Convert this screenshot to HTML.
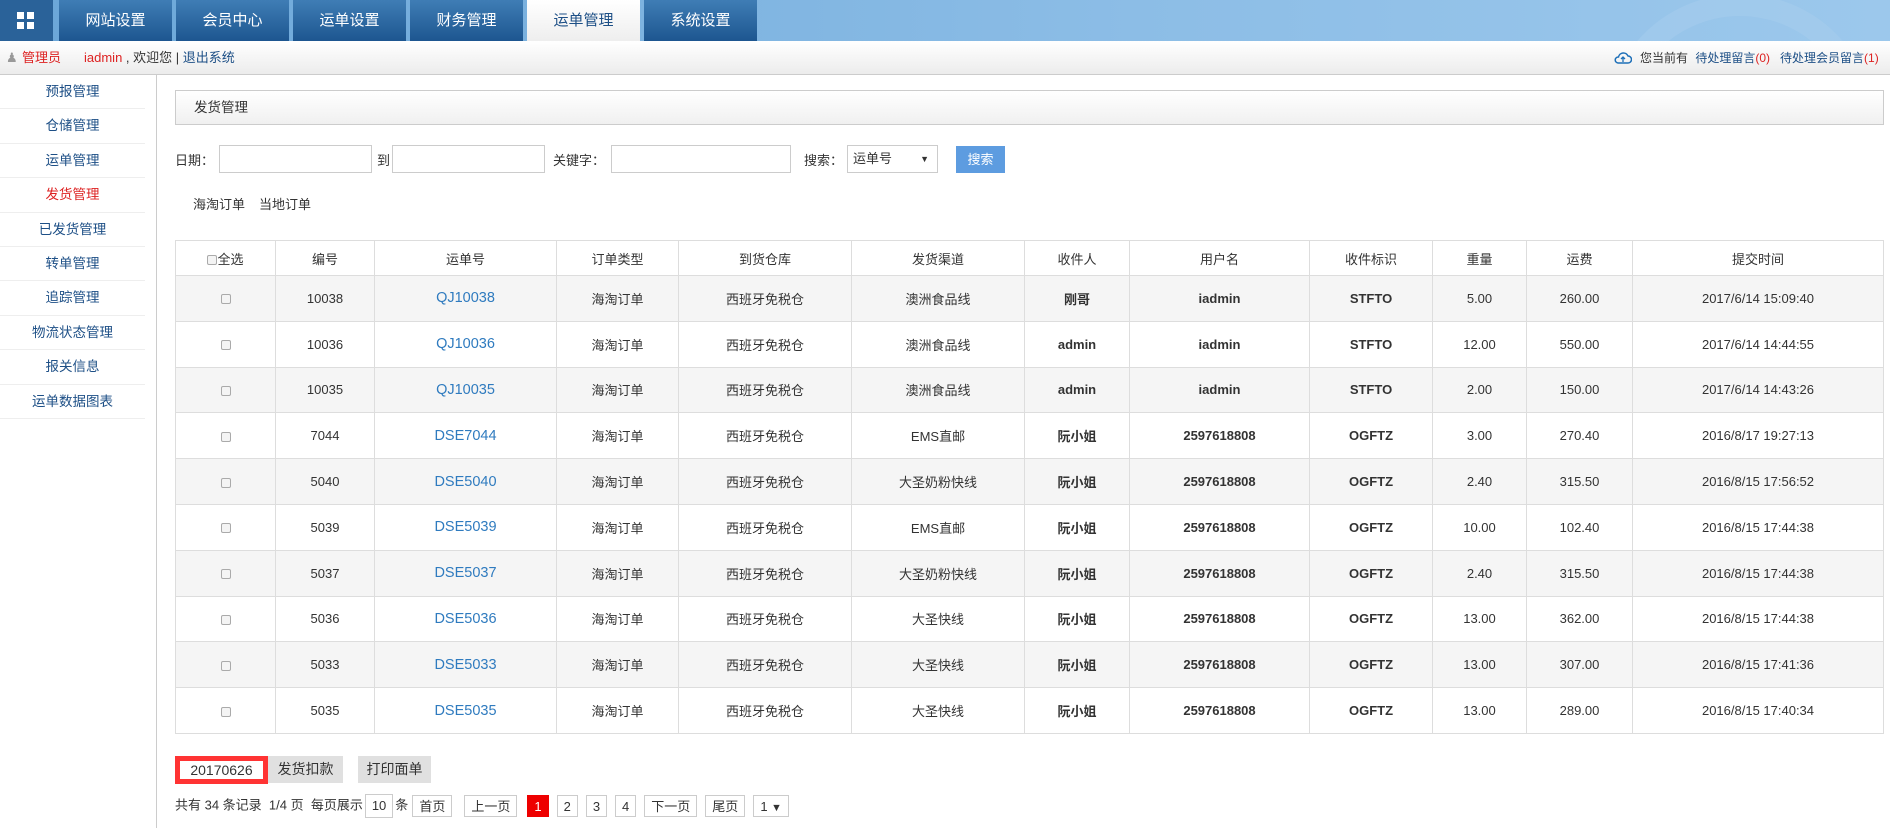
<!DOCTYPE html>
<html><head><meta charset="utf-8"><style>
*{margin:0;padding:0;box-sizing:border-box}
body{width:1890px;height:828px;overflow:hidden;background:#fff;font-family:"Liberation Sans","Noto Sans CJK SC",sans-serif;font-size:13px;color:#333;position:relative}
.hd{position:absolute;left:0;top:0;width:1890px;height:41px;background:linear-gradient(90deg,#6aa6d8,#8cbde6 60%,#9cc8ec);}
.tab{position:absolute;top:0;height:41px;width:113px;background:linear-gradient(#3f7db5,#1d5690);color:#fff;font-size:15px;text-align:center;line-height:41px}
.tab.on{background:linear-gradient(#fff,#eee);color:#1d4f86}
.bar{position:absolute;left:0;top:41px;width:1890px;height:34px;background:linear-gradient(#fff,#ececec);border-bottom:1px solid #ccc;font-size:13px;line-height:34px;white-space:nowrap}
.side{position:absolute;left:0;top:75px;width:157px;height:753px;border-right:1px solid #ccc}
.side div{height:34.4px;line-height:34px;text-align:center;color:#1d4f86;font-size:13.5px;border-bottom:1px solid #eee;width:145px}
.ttl{position:absolute;left:175px;top:90px;width:1709px;height:35px;border:1px solid #ccc;background:linear-gradient(#fff,#f0f0f0);line-height:33px;padding-left:18px;font-size:13.5px}
.lbl{position:absolute;top:150px;font-size:13px}
.inp{position:absolute;top:145px;height:28px;border:1px solid #ccc;background:#fff}
table{position:absolute;left:175px;top:240px;width:1709px;border-collapse:collapse}
td,th{border:1px solid #ddd;text-align:center;font-size:13px;font-weight:normal;height:45.8px}
th{height:35px}
tbody tr:nth-child(odd){background:#f5f5f5}
a{color:#2f7bbf;text-decoration:none;font-size:14.5px}
.b{font-weight:bold}
.cb{display:inline-block;width:10px;height:10px;border:1px solid #aaa;border-radius:2px;background:#f4f4f4;vertical-align:middle}
.btn{position:absolute;top:756px;height:27px;background:#e0e0e0;line-height:27px;text-align:center;font-size:14px}
.pg{position:absolute;top:794px;left:175px;font-size:13px;line-height:22px;white-space:nowrap}
.pg span.p{display:inline-block;border:1px solid #ccc;padding:0 6px;margin:0 4px;height:22px;vertical-align:middle}
</style></head><body>
<div class="hd">
<svg style="position:absolute;left:0;top:0" width="53" height="41"><rect width="53" height="41" fill="#2a6299"/><rect x="17" y="12" width="7" height="7" fill="#fff"/><rect x="27" y="12" width="7" height="7" fill="#fff"/><rect x="17" y="22" width="7" height="7" fill="#fff"/><rect x="27" y="22" width="7" height="7" fill="#fff"/></svg>
<div class="tab" style="left:59px">网站设置</div>
<div class="tab" style="left:176px">会员中心</div>
<div class="tab" style="left:293px">运单设置</div>
<div class="tab" style="left:410px">财务管理</div>
<div class="tab on" style="left:527px">运单管理</div>
<div class="tab" style="left:644px">系统设置</div>
<svg style="position:absolute;left:1550px;top:0" width="340" height="41"><circle cx="190" cy="130" r="125" fill="none" stroke="#a8cdee" stroke-width="22" opacity=".5"/></svg>
</div>
<div class="bar">
<span style="position:absolute;left:6px;color:#999">&#9823;</span>
<span style="position:absolute;left:22px;color:#d22">管理员</span>
<span style="position:absolute;left:84px"><span style="color:#d22">iadmin</span> , 欢迎您 | <span style="color:#1d4f86">退出系统</span></span>
<svg style="position:absolute;left:1614px;top:10px" width="18" height="14" viewBox="0 0 18 14"><path d="M4 12h10a3.5 3.5 0 0 0 0-7 5 5 0 0 0-9.5 1A3 3 0 0 0 4 12z" fill="none" stroke="#1d6fb8" stroke-width="1.5"/><path d="M9 11V6M7 8l2-2 2 2" fill="none" stroke="#1d6fb8" stroke-width="1.3"/></svg>
<span style="position:absolute;left:1640px;font-size:12px">您当前有 <span style="color:#1d4f86;margin-left:4px">待处理留言<span style="color:#d22">(0)</span></span><span style="color:#1d4f86;margin-left:10px">待处理会员留言<span style="color:#d22">(1)</span></span></span>
</div>
<div class="side">
<div>预报管理</div><div>仓储管理</div><div>运单管理</div><div style="color:#d22">发货管理</div><div>已发货管理</div><div>转单管理</div><div>追踪管理</div><div>物流状态管理</div><div>报关信息</div><div>运单数据图表</div>
</div>
<div class="ttl">发货管理</div>
<span class="lbl" style="left:175px">日期：</span><div class="inp" style="left:219px;width:153px"></div>
<span class="lbl" style="left:377px">到</span><div class="inp" style="left:392px;width:153px"></div>
<span class="lbl" style="left:553px">关键字：</span><div class="inp" style="left:611px;width:180px"></div>
<span class="lbl" style="left:804px">搜索：</span><div class="inp" style="left:847px;width:91px;font-size:13px;line-height:26px;padding-left:5px">运单号<span style="position:absolute;right:8px;font-size:9px">▼</span></div>
<div style="position:absolute;left:956px;top:146px;width:49px;height:27px;background:#5d9ce0;color:#fff;text-align:center;line-height:27px;font-size:13px">搜索</div>
<span style="position:absolute;left:193px;top:194px">海淘订单</span><span style="position:absolute;left:259px;top:194px">当地订单</span>
<table>
<colgroup><col style="width:100px"><col style="width:99px"><col style="width:182px"><col style="width:122px"><col style="width:173px"><col style="width:173px"><col style="width:105px"><col style="width:180px"><col style="width:123px"><col style="width:94px"><col style="width:106px"><col></colgroup>
<thead><tr><th><span class="cb"></span>全选</th><th>编号</th><th>运单号</th><th>订单类型</th><th>到货仓库</th><th>发货渠道</th><th>收件人</th><th>用户名</th><th>收件标识</th><th>重量</th><th>运费</th><th>提交时间</th></tr></thead>
<tbody>
<tr><td><span class="cb"></span></td><td>10038</td><td><a>QJ10038</a></td><td>海淘订单</td><td>西班牙免税仓</td><td>澳洲食品线</td><td class="b">刚哥</td><td class="b">iadmin</td><td class="b">STFTO</td><td>5.00</td><td>260.00</td><td>2017/6/14 15:09:40</td></tr>
<tr><td><span class="cb"></span></td><td>10036</td><td><a>QJ10036</a></td><td>海淘订单</td><td>西班牙免税仓</td><td>澳洲食品线</td><td class="b">admin</td><td class="b">iadmin</td><td class="b">STFTO</td><td>12.00</td><td>550.00</td><td>2017/6/14 14:44:55</td></tr>
<tr><td><span class="cb"></span></td><td>10035</td><td><a>QJ10035</a></td><td>海淘订单</td><td>西班牙免税仓</td><td>澳洲食品线</td><td class="b">admin</td><td class="b">iadmin</td><td class="b">STFTO</td><td>2.00</td><td>150.00</td><td>2017/6/14 14:43:26</td></tr>
<tr><td><span class="cb"></span></td><td>7044</td><td><a>DSE7044</a></td><td>海淘订单</td><td>西班牙免税仓</td><td>EMS直邮</td><td class="b">阮小姐</td><td class="b">2597618808</td><td class="b">OGFTZ</td><td>3.00</td><td>270.40</td><td>2016/8/17 19:27:13</td></tr>
<tr><td><span class="cb"></span></td><td>5040</td><td><a>DSE5040</a></td><td>海淘订单</td><td>西班牙免税仓</td><td>大圣奶粉快线</td><td class="b">阮小姐</td><td class="b">2597618808</td><td class="b">OGFTZ</td><td>2.40</td><td>315.50</td><td>2016/8/15 17:56:52</td></tr>
<tr><td><span class="cb"></span></td><td>5039</td><td><a>DSE5039</a></td><td>海淘订单</td><td>西班牙免税仓</td><td>EMS直邮</td><td class="b">阮小姐</td><td class="b">2597618808</td><td class="b">OGFTZ</td><td>10.00</td><td>102.40</td><td>2016/8/15 17:44:38</td></tr>
<tr><td><span class="cb"></span></td><td>5037</td><td><a>DSE5037</a></td><td>海淘订单</td><td>西班牙免税仓</td><td>大圣奶粉快线</td><td class="b">阮小姐</td><td class="b">2597618808</td><td class="b">OGFTZ</td><td>2.40</td><td>315.50</td><td>2016/8/15 17:44:38</td></tr>
<tr><td><span class="cb"></span></td><td>5036</td><td><a>DSE5036</a></td><td>海淘订单</td><td>西班牙免税仓</td><td>大圣快线</td><td class="b">阮小姐</td><td class="b">2597618808</td><td class="b">OGFTZ</td><td>13.00</td><td>362.00</td><td>2016/8/15 17:44:38</td></tr>
<tr><td><span class="cb"></span></td><td>5033</td><td><a>DSE5033</a></td><td>海淘订单</td><td>西班牙免税仓</td><td>大圣快线</td><td class="b">阮小姐</td><td class="b">2597618808</td><td class="b">OGFTZ</td><td>13.00</td><td>307.00</td><td>2016/8/15 17:41:36</td></tr>
<tr><td><span class="cb"></span></td><td>5035</td><td><a>DSE5035</a></td><td>海淘订单</td><td>西班牙免税仓</td><td>大圣快线</td><td class="b">阮小姐</td><td class="b">2597618808</td><td class="b">OGFTZ</td><td>13.00</td><td>289.00</td><td>2016/8/15 17:40:34</td></tr>
</tbody></table>
<div style="position:absolute;left:175px;top:756px;width:93px;height:28px;background:#f33;padding:5px 5px"><div style="background:#fff;height:18px;line-height:18px;text-align:center;font-size:14px">20170626</div></div>
<div class="btn" style="left:268px;width:75px">发货扣款</div>
<div class="btn" style="left:358px;width:73px">打印面单</div>
<div class="pg">共有 34 条记录 &nbsp;1/4 页 &nbsp;每页展示<span class="p" style="margin:0 2px;height:24px">10</span>条<span class="p">首页</span><span class="p" style="margin-left:8px">上一页</span><span class="p" style="background:#e00;color:#fff;border-color:#e00;margin-left:6px">1</span><span class="p">2</span><span class="p">3</span><span class="p">4</span><span class="p">下一页</span><span class="p">尾页</span><span class="p">1 <small>▼</small></span></div>
</body></html>
